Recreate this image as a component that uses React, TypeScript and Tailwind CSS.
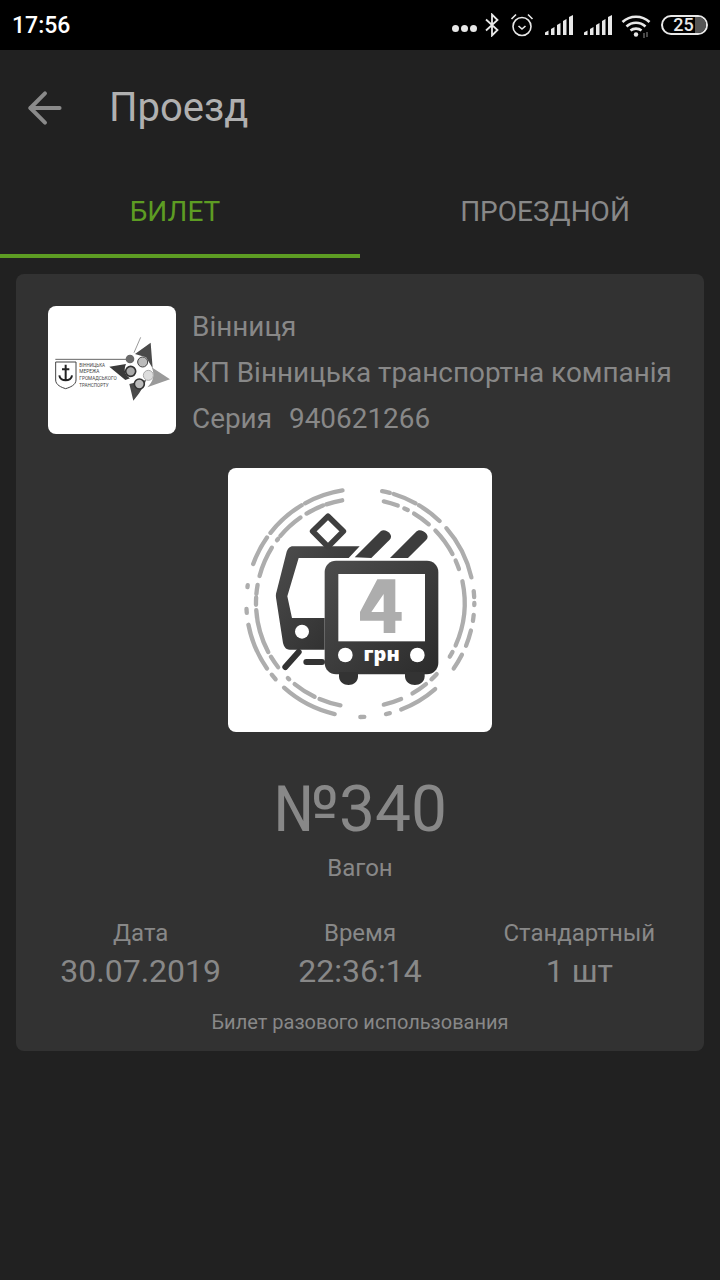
import { ArrowLeft } from "lucide-react";

// dashed rings on the ticket picture: [from, to] in degrees, clockwise from 12 o'clock
const OUTER_ARCS = [
  [-9, -29], [-31, -52], [-55, -70], [-81, -82], [-93, -95], [-101, -125], [-129, -132], [-138, -167],
  [11, 15], [17, 29], [31, 44], [49, 77], [84, 87], [90, 91], [96, 99], [104, 112], [117, 125], [139, 159], [165, 167], [178, 180],
];
const INNER_ARCS = [
  [-10, -19], [-21, -31], [-35, -50], [-52, -53], [-58, -75], [-80, -85], [-87, -91], [-94, -118], [-121, -128], [-136, -137], [-141, -154], [-157, -169],
  [13, 21], [25, 27], [31, 41], [46, 62], [66, 71], [78, 114], [118, 121], [133, 137], [141, 150], [157, 167],
];

function arc(r: number, from: number, to: number) {
  const pt = (deg: number) => {
    const a = (deg * Math.PI) / 180;
    return `${(397 + r * Math.sin(a)).toFixed(1)} ${(405 - r * Math.cos(a)).toFixed(1)}`;
  };
  return `M${pt(from)} A${r} ${r} 0 0 ${to > from ? 1 : 0} ${pt(to)}`;
}

function TicketArt() {
  return (
    <svg viewBox="0 0 792 792" className="h-full w-full">
      <defs>
        <linearGradient id="dark" x1="0" y1="0" x2="1" y2="1">
          <stop offset="0" stopColor="#4d4d4d" />
          <stop offset="1" stopColor="#2b2b2b" />
        </linearGradient>
      </defs>
      <g fill="none" stroke="#adadad" strokeWidth="13" strokeLinecap="round">
        {OUTER_ARCS.map(([a, b]) => (
          <path key={a} d={arc(342, a, b)} />
        ))}
        {INNER_ARCS.map(([a, b]) => (
          <path key={a} d={arc(313, a, b)} />
        ))}
      </g>
      {/* rear car */}
      <path
        d="M195 235 H395 L362 270 H212 L178 385 L192 450 H290 V545 H185 C172 545 168 535 165 525 L145 395 C143 385 143 378 146 370 L175 255 C178 243 185 235 195 235 Z"
        fill="url(#dark)"
      />
      <circle cx="222" cy="491" r="21" fill="#fff" />
      <path d="M300 145 L346 190 L300 236 L254 190 Z" fill="none" stroke="#3f3f3f" strokeWidth="17" strokeLinejoin="round" />
      <path d="M300 232 V240" stroke="#3f3f3f" strokeWidth="12" />
      <path d="M380 268 L458 190 C470 178 500 200 485 215 L430 270 Z" fill="#3d3d3d" />
      <path d="M486 270 L566 190 C578 178 610 200 595 215 L540 270 Z" fill="#3d3d3d" />
      <path d="M235 582 H282 M212 552 L172 597" stroke="#333" strokeWidth="18" strokeLinecap="round" fill="none" />
      {/* front car */}
      <rect x="290" y="278" width="341" height="341" rx="34" fill="url(#dark)" />
      <path d="M333 612 H390 V625 C390 660 333 660 333 625 Z" fill="#333" />
      <path d="M531 612 H590 V625 C590 660 531 660 531 625 Z" fill="#333" />
      <rect x="331" y="318" width="260" height="202" fill="#fff" />
      <path
        d="M448 334 H502 V432 H521 V458 H502 V495 H467 V458 H396 V432 Z M467 378 L430 432 H467 Z"
        fill="#adadad"
        fillRule="evenodd"
      />
      <circle cx="352" cy="561" r="22" fill="#fff" />
      <circle cx="568" cy="561" r="22" fill="#fff" />
      <text x="461" y="578" textAnchor="middle" fill="#fff" fontFamily="'Open Sans', sans-serif" fontWeight="800" fontSize="60">
        грн
      </text>
    </svg>
  );
}

function CompanyLogo() {
  return (
    <svg viewBox="24 18 384 384" className="h-full w-full">
      <path d="M46 178 H258" stroke="#666" strokeWidth="3" />
      <path d="M47 186 H108 V240 C108 255 90 262 77 266 C64 262 47 255 47 240 Z" fill="none" stroke="#444" strokeWidth="3" />
      <path d="M77 194 V240 M66 208 H88 M58 226 C60 246 94 246 96 226" fill="none" stroke="#222" strokeWidth="6" />
      <g fontFamily="'Roboto', sans-serif" fontSize="18" fill="#444">
        <text x="118" y="201" textLength="77" lengthAdjust="spacingAndGlyphs">ВІННИЦЬКА</text>
        <text x="118" y="220" textLength="60" lengthAdjust="spacingAndGlyphs">МЕРЕЖА</text>
        <text x="118" y="241" textLength="112" lengthAdjust="spacingAndGlyphs">ГРОМАДСЬКОГО</text>
        <text x="118" y="262" textLength="88" lengthAdjust="spacingAndGlyphs">ТРАНСПОРТУ</text>
      </g>
      {/* star */}
      <path d="M208 200 L258 192 C250 210 255 225 270 235 L256 240 Z" fill="#3a3a3a" />
      <path d="M285 162 L332 128 L338 205 L318 172 Z" fill="#4a4a4a" />
      <path d="M280 302 L268 252 L318 240 C312 262 296 282 280 302 Z" fill="#4a4a4a" />
      <path d="M335 202 L390 238 L322 262 C340 245 345 225 335 202 Z" fill="#9a9a9a" />
      <path d="M282 158 L302 112" stroke="#666" strokeWidth="2" />
      <circle cx="270" cy="177" r="13" fill="#6a6a6a" />
      <circle cx="308" cy="186" r="15" fill="#bbb" stroke="#444" strokeWidth="3" />
      <circle cx="272" cy="214" r="15" fill="#aaa" stroke="#333" strokeWidth="5" />
      <circle cx="325" cy="226" r="15" fill="#ddd" stroke="#aaa" strokeWidth="3" />
      <circle cx="298" cy="252" r="15" fill="#bbb" stroke="#333" strokeWidth="5" />
    </svg>
  );
}

function SignalBars({ className }: { className: string }) {
  return (
    <svg viewBox="0 0 28 20" className={`h-[20px] w-[28px] ${className}`} fill="#e8e8e8">
      <path d="M0 20 V17.5 L3.5 15.5 V20 Z" />
      <path d="M6 20 V14 L9.5 12 V20 Z" />
      <path d="M12 20 V10 L15.5 8 V20 Z" />
      <path d="M18 20 V6 L21.5 4 V20 Z" />
      <path d="M24 20 V2 L28 0 V20 Z" />
    </svg>
  );
}

function StatusBar() {
  return (
    <div className="flex h-[50px] items-center justify-between bg-black pl-[12px] pr-[12px] text-white">
      <span className="text-[23px] font-medium leading-none">17:56</span>
      <div className="flex items-center">
        <div className="mt-[7px] flex gap-[2px]">
          <span className="h-[7px] w-[7px] rounded-full bg-[#e8e8e8]" />
          <span className="h-[7px] w-[7px] rounded-full bg-[#e8e8e8]" />
          <span className="h-[7px] w-[7px] rounded-full bg-[#e8e8e8]" />
        </div>
        <svg viewBox="0 0 14 24" className="ml-[8px] h-[24px] w-[14px]" fill="none" stroke="#e8e8e8" strokeWidth="1.8">
          <path d="M1 6.5 L12.5 17 L7 22.5 V1.5 L12.5 7 L1 17.5" />
        </svg>
        <svg viewBox="0 0 24 24" className="ml-[11px] h-[24px] w-[24px]" fill="none" stroke="#e8e8e8" strokeWidth="1.6">
          <circle cx="12" cy="13.5" r="9" />
          <path d="M8.5 13 L12 16 L15.5 13 M1.5 6 L6 1.5 M22.5 6 L18 1.5" />
        </svg>
        <SignalBars className="ml-[11px]" />
        <SignalBars className="ml-[11px]" />
        <svg viewBox="0 0 30 24" className="ml-[9px] mt-[1px] h-[24px] w-[30px]" fill="none" stroke="#e8e8e8" strokeWidth="2.6">
          <path d="M1.5 8 C9 1 21 1 28.5 8 M5.5 12.5 C11 7.5 19 7.5 24.5 12.5 M9.5 16.5 C12.5 14 17.5 14 20.5 16.5" />
          <circle cx="15" cy="20.5" r="2.2" fill="#e8e8e8" stroke="none" />
          <path d="M23 19 V24 M26 18 V23" stroke="#777" strokeWidth="1.2" />
        </svg>
        <div className="relative ml-[10px] flex h-[20px] w-[47px] items-center justify-center overflow-hidden rounded-full border-2 border-[#e8e8e8]">
          <span className="absolute bottom-0 right-0 top-0 w-[11px] bg-[#555]" />
          <span className="relative -ml-[2px] text-[18px] font-medium leading-none text-[#e8e8e8]">25</span>
        </div>
      </div>
    </div>
  );
}

function Stat({ label, value }: { label: string; value: string }) {
  return (
    <div className="flex flex-col items-center">
      <span className="text-[24px] leading-[28px] text-[#888888]">{label}</span>
      <span className="mt-[5px] text-[32px] leading-[38px] text-[#888888]">{value}</span>
    </div>
  );
}

export default function App() {
  return (
    <div className="h-[1280px] w-[720px] overflow-hidden bg-[#212121] font-['Roboto',sans-serif]">
      <StatusBar />
      <div className="flex h-[116px] items-center pl-[20px]">
        <ArrowLeft className="h-[50px] w-[50px] text-[#8a8a8a]" strokeWidth={1.9} />
        <span className="ml-[39px] text-[40px] text-[#b0b0b0]">Проезд</span>
      </div>
      <div className="flex h-[92px]">
        <div className="flex w-[360px] flex-col border-b-[4px] border-[#5d9c23]">
          <span className="mt-[25px] pr-[10px] text-center text-[28px] text-[#5d9c23]">БИЛЕТ</span>
        </div>
        <div className="w-[360px] pl-[10px] pt-[25px] text-center text-[28px] text-[#888888]">ПРОЕЗДНОЙ</div>
      </div>
      <div className="mx-[16px] mt-[16px] h-[777px] rounded-[8px] bg-[#323232] px-[32px] pt-[32px]">
        <div className="flex">
          <div className="h-[128px] w-[128px] shrink-0 overflow-hidden rounded-[8px] bg-white">
            <CompanyLogo />
          </div>
          <div className="ml-[16px] flex flex-col whitespace-nowrap text-[27.9px] leading-[46px] text-[#888888]">
            <span className="-mt-[2px]">Вінниця</span>
            <span>КП Вінницька транспортна компанія</span>
            <div className="flex gap-[17px]">
              <span>Серия</span>
              <span>940621266</span>
            </div>
          </div>
        </div>
        <div className="mx-auto mt-[26px] h-[264px] w-[264px] overflow-hidden rounded-[8px] bg-white">
          <TicketArt />
        </div>
        <div className="mt-[40px] text-center text-[64px] leading-[76px] text-[#888888]">№340</div>
        <div className="mt-[6px] text-center text-[24px] leading-[28px] text-[#888888]">Вагон</div>
        <div className="-mx-[17px] mt-[37px] grid grid-cols-3">
          <Stat label="Дата" value="30.07.2019" />
          <Stat label="Время" value="22:36:14" />
          <Stat label="Стандартный" value="1 шт" />
        </div>
        <div className="mt-[20px] text-center text-[20px] leading-[24px] text-[#888888]">Билет разового использования</div>
      </div>
    </div>
  );
}
